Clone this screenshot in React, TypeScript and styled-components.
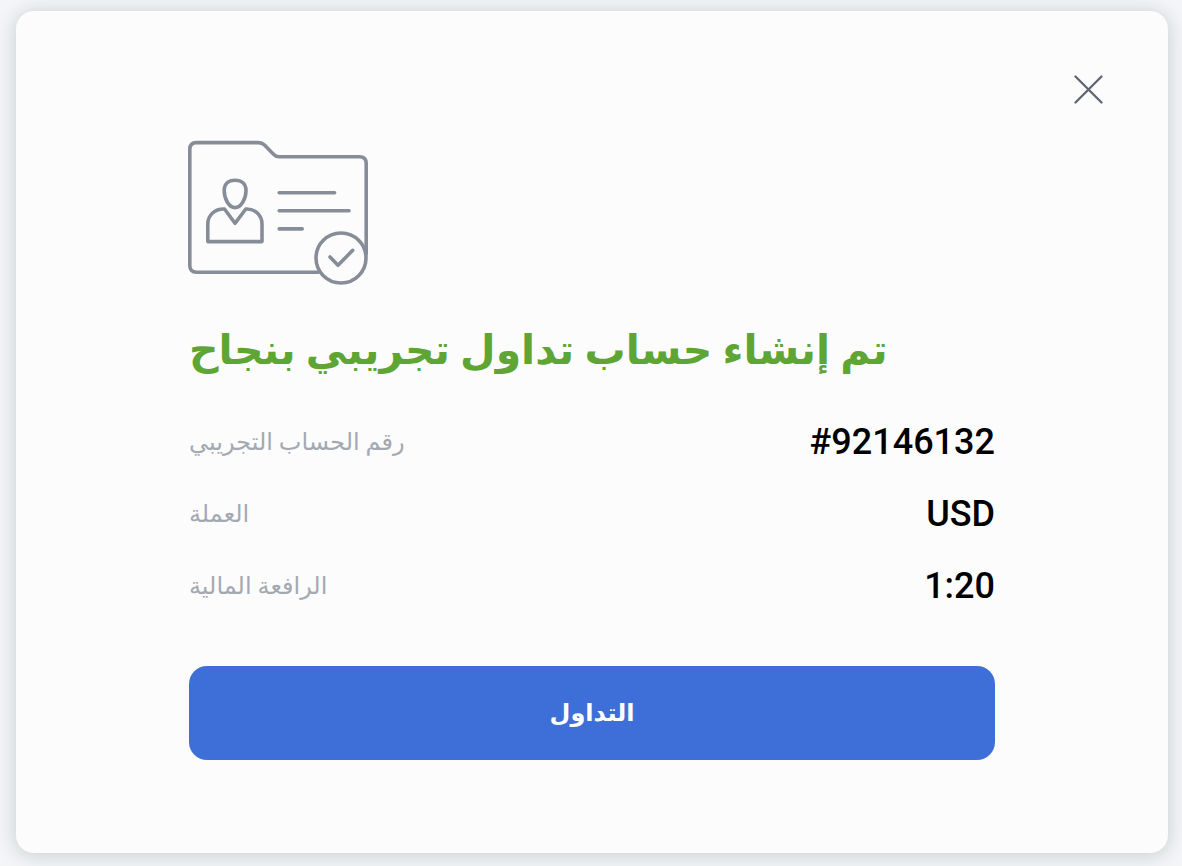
import React from "react";
import styled, { createGlobalStyle } from "styled-components";

const GlobalStyle = createGlobalStyle`
  *, *::before, *::after { box-sizing: border-box; }
  body {
    margin: 0;
    background: #f3f5f7;
    font-family: Roboto, "DejaVu Sans", sans-serif;
  }
`;

const Page = styled.main`
  padding: 11px 14px 13px 16px;
`;

const Card = styled.section`
  position: relative;
  padding: 129px 173px 93px;
  background: #fcfcfd;
  border-radius: 18px;
  box-shadow: 0 2px 20px rgba(30, 40, 50, 0.2);
`;

const CloseButton = styled.button`
  position: absolute;
  top: 56px;
  right: 56px;
  display: flex;
  padding: 8px;
  border: 0;
  background: none;
  cursor: pointer;
`;

const FolderArt = styled.svg`
  display: block;
  margin-left: -1px;
`;

const Title = styled.h1`
  margin: 28px 0 20px;
  color: #5fa534;
  font-size: 41px;
  font-weight: 700;
  line-height: 72px;
  white-space: nowrap;
`;

const Details = styled.dl`
  margin: 0;
`;

const Row = styled.div`
  display: flex;
  align-items: center;
  justify-content: space-between;
  height: 72px;
`;

const Label = styled.dt`
  color: #a4a9b1;
  font-size: 24px;
  line-height: 36px;
`;

const Value = styled.dd`
  margin: 0;
  color: #000;
  font-size: 36px;
  font-weight: 500;
  line-height: 48px;
`;

const TradeButton = styled.button`
  display: block;
  width: 100%;
  height: 94px;
  margin-top: 44px;
  padding: 0;
  border: 0;
  border-radius: 18px;
  background: #3e6fd8;
  color: #fff;
  font: 700 24px/36px Roboto, "DejaVu Sans", sans-serif;
  cursor: pointer;
`;

const details = [
  { label: "رقم الحساب التجريبي", value: "#92146132" },
  { label: "العملة", value: "USD" },
  { label: "الرافعة المالية", value: "1:20" },
];

const FolderIcon = () => (
  <FolderArt
    width="182"
    height="146"
    viewBox="0 0 182 146"
    fill="none"
    stroke="#868d98"
    strokeWidth="3.6"
    strokeLinecap="round"
    strokeLinejoin="round"
    aria-hidden="true"
  >
    <path d="M130 132.2H8.5Q1.8 132.2 1.8 125.5V9.3Q1.8 2.6 8.5 2.6H70.5Q74 2.6 76.5 5L85.5 14.2Q88 16.8 91 16.8H171.5Q178.2 16.8 178.2 23.5V114" />
    <circle cx="153" cy="118" r="25" />
    <path d="M142 117l8 8.3 14.7-15" />
    <path d="M91.2 52.8h55.4M91.2 70.8h69.8M91.2 88.9h23" />
    <path d="M47 40.3C40.5 40.3 36.2 43.6 36.2 50.5C36.2 59 41 67.6 47 67.6S58 59 58 50.5C58 43.6 53.5 40.3 47 40.3Z" />
    <path d="M36.5 69L47 83.3L57.8 69C67 68.6 74 75 74 84V101.6H19.8V84C19.8 75 27 68.6 36.5 69Z" />
  </FolderArt>
);

export default function App() {
  return (
    <>
      <GlobalStyle />
      <Page>
        <Card role="dialog" aria-labelledby="dialog-title">
          <CloseButton type="button" aria-label="إغلاق">
            <svg
              width="30"
              height="30"
              viewBox="0 0 30 30"
              fill="none"
              stroke="#5f6672"
              strokeWidth="2.3"
              strokeLinecap="round"
              aria-hidden="true"
            >
              <path d="M1.5 1.5l26 26M27.5 1.5L1.5 27.5" />
            </svg>
          </CloseButton>
          <FolderIcon />
          <Title id="dialog-title">تم إنشاء حساب تداول تجريبي بنجاح</Title>
          <Details>
            {details.map(({ label, value }) => (
              <Row key={value}>
                <Label>{label}</Label>
                <Value>{value}</Value>
              </Row>
            ))}
          </Details>
          <TradeButton type="button">التداول</TradeButton>
        </Card>
      </Page>
    </>
  );
}
